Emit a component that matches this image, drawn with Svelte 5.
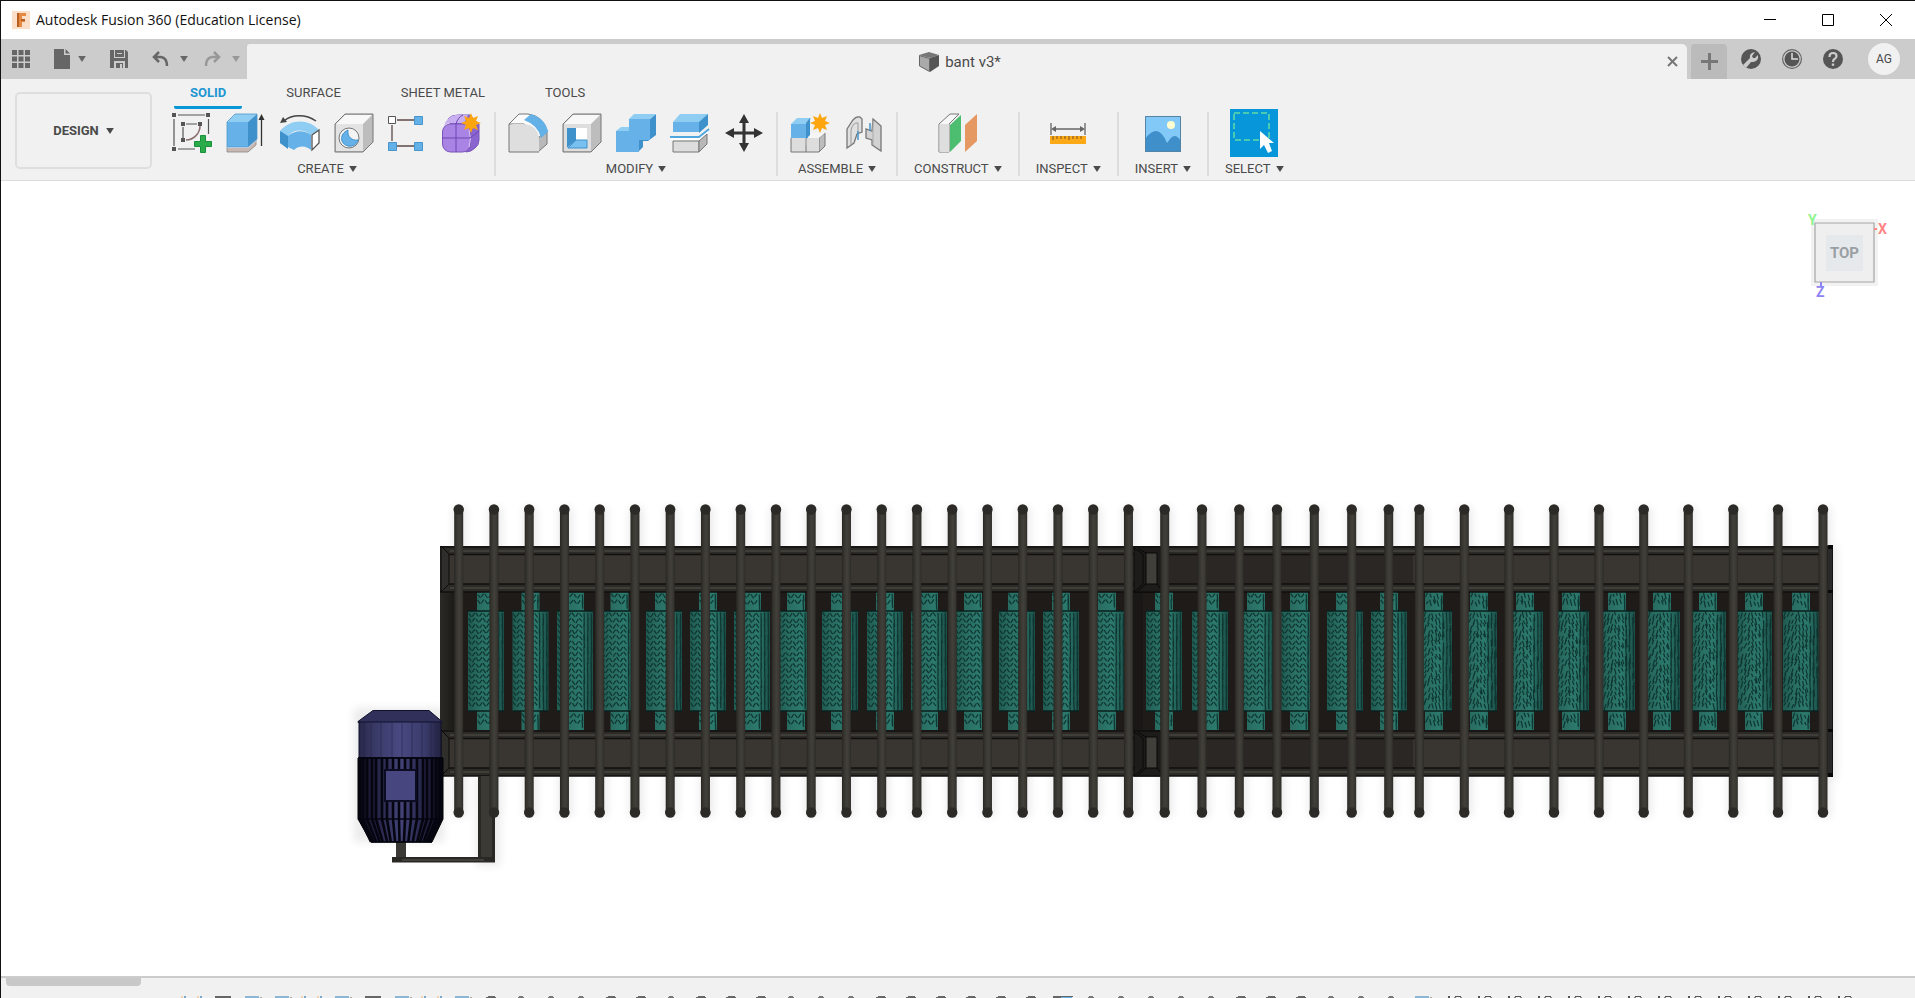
<script>
  const rods = [
    ...Array.from({ length: 20 }, (_, i) => 458.7 + i * 35.25),
    1164.7, 1202, 1239.3, 1277, 1314.3, 1351.7, 1388.7, 1419.3,
    1464.3, 1509, 1554, 1599, 1643.7, 1688.3, 1733.3, 1778, 1823
  ];
  const rollerCentres = [
    486, 530.5, 575, 619.5, 664, 708, 752, 796, 840, 885, 929, 973, 1017, 1061, 1107,
    1164, 1210, 1256, 1299, 1345, 1389, 1434, 1479, 1525, 1571, 1617, 1662, 1708, 1754, 1801
  ];

  function grain(cx, index) {
    let seed = index * 7919 + 13;
    const rnd = () => {
      seed = (seed * 1103515245 + 12345) % 2147483648;
      return seed / 2147483648;
    };
    let d = '';
    const wild = index > 20;
    const put = (x0, x1, y0, y1, pitch) => {
      let col = 0;
      for (let x = x0 + 2; x < x1 - 1; x += 3.6) {
        const dir = wild ? (x < cx - 4 ? -0.7 : 0.6) : col % 2 ? -1 : 1;
        const fine = x > cx + 7;
        for (let y = y0 + 2; y < y1 - 5; y += pitch) {
          const j = (rnd() - 0.5) * (wild ? 4 : 1.4);
          const len = fine ? 6 + rnd() * 6 : wild ? 3 + rnd() * 4 : 3.2 + rnd();
          const dx = fine ? 0.4 : 2.6 * dir;
          const yy = Math.max(y0, Math.min(y + j, y1 - len));
          d += `M${(x - dx / 2 + j * 0.3).toFixed(1)} ${yy.toFixed(1)}l${dx} ${len.toFixed(1)}`;
        }
        col++;
      }
    };
    put(cx - 18, cx + 18, 611, 711, 5.6);
    put(cx - 9, cx + 9, 592, 610, 6);
    put(cx - 9, cx + 9, 712, 730, 6);
    return d;
  }
  const rollers = rollerCentres.map((cx, i) => ({ cx, d: grain(cx, i) }));

  const fins = [360, 363, 367, 372, 376, 382, 387, 393, 399, 405, 411, 417, 423, 427, 432, 436, 439, 441];
  const taper = (x) => 401 + (x - 401) * 0.73;

  const kinds = ['sketch', 'bar', 'blue', 'blue', 'sketch', 'blue', 'bar', 'blue', 'sketch', 'blue'];
  const timeline = Array.from({ length: 56 }, (_, i) => {
    if (i < 10) return kinds[i];
    if (i === 29) return 'mixed';
    if (i === 41) return 'blue';
    if (i > 41) return 'pair';
    return [11, 12, 13, 16, 20, 21, 22, 30, 31, 32, 33, 34, 38, 39, 40].includes(i) ? 'dot' : 'dash';
  });

  const tabs = ['SOLID', 'SURFACE', 'SHEET METAL', 'TOOLS'];
  const groups = [
    { label: 'CREATE', tools: ['sketch', 'extrude', 'revolve', 'hole', 'pattern', 'form'] },
    { label: 'MODIFY', tools: ['fillet', 'shell', 'combine', 'split', 'move'] },
    { label: 'ASSEMBLE', tools: ['component', 'joint'] },
    { label: 'CONSTRUCT', tools: ['plane'] },
    { label: 'INSPECT', tools: ['measure'] },
    { label: 'INSERT', tools: ['image'] },
    { label: 'SELECT', tools: ['select'] }
  ];
  let active = $state('SOLID');
</script>

{#snippet star(x, y)}
  <path transform="translate({x} {y})" fill="#fca50f" d="M0-10 2-5 7-7 5-2 10 0 5 2 7 7 2 5 0 10-2 5-7 7-5 2-10 0-5-2-7-7-2-5z" />
{/snippet}

{#snippet glyph(name)}
  {#if name === 'sketch'}
    <svg width="40" height="40" viewBox="0 0 40 40" fill="none" stroke="#555">
      <path d="M6 2h27M2 6v27M36.500 6v15M6 36h17M14 11h11M11 14v11" stroke-width="1.200" />
      <path d="M28 13c0 7-6 14-14 14" stroke="#8a6f6f" stroke-width="1.500" />
      <path fill="#555" stroke="none" d="M0 0h4v4H0zM34 0h4v4h-4zM0 34h4v4H0zM9 9h4v4H9zM26 9h4v4h-4zM9 25h4v4H9z" />
      <path fill="#2cab4a" stroke="#18903a" d="M28.500 22.500h5v6h6v5h-6v6h-5v-6h-6v-5h6z" />
    </svg>
  {:else if name === 'extrude'}
    <svg width="40" height="40" viewBox="0 0 40 40">
      <path fill="#c9b8b2" stroke="#888" stroke-width=".8" d="M1 34h21l8-7v5l-8 7H1z" />
      <path fill="#eee" d="M1 33h21l8-7v2l-8 7H1z" />
      <path fill="#66b2e8" d="M1 9h21v25H1z" /><path fill="#8fcdf3" d="M1 9 9 1h22l-9 8z" /><path fill="#3f91cb" d="m22 9 9-8v25l-9 8z" />
      <path fill="none" stroke="#4f98cc" stroke-width=".8" d="M1 34V9l8-8h22v25l-9 8z" />
      <path stroke="#333" stroke-width="1.300" d="M35.500 33V5" /><path fill="#333" d="m35.500 1 3 6h-6z" />
    </svg>
  {:else if name === 'revolve'}
    <svg width="40" height="40" viewBox="0 0 40 40">
      <path fill="none" stroke="#444" stroke-width="1.500" d="M4 8C12 1 26 1 36 8" /><path fill="#444" d="m0 10 3-6 4 5z" />
      <path fill="#8fcdf3" d="M0 18C10 6 28 5 39 17l-8 5c-8-6-17-6-23 1z" />
      <path fill="#66b2e8" d="M0 18l8 5c7-6 16-6 23-1v15c-5-4-11-5-17 0L0 30z" />
      <path fill="#3f91cb" d="M0 18l8 5v13l-8-6z" />
      <path fill="#fff" stroke="#555" stroke-width="1.300" d="m32 22 7-5v13l-7 7z" />
    </svg>
  {:else if name === 'hole'}
    <svg width="40" height="40" viewBox="0 0 40 40" stroke="#777" stroke-linejoin="round">
      <path fill="#bdbdbd" d="m1 11 10-10h28v28L29 39H1z" /><path stroke="none" fill="#e3e3e3" d="M2 11h27v27H2z" /><path stroke="none" fill="#f8f8f8" d="M2 11 11 2h27l-9 9z" />
      <circle cx="15" cy="25" r="10" fill="#f4f4f4" /><path fill="#66b2e8" stroke="#3f91cb" d="M14 17c-9 4-8 14 0 16 5 1 9-2 10-6-6 1-11-3-10-10z" />
    </svg>
  {:else if name === 'pattern'}
    <svg width="40" height="40" viewBox="0 0 40 40">
      <path stroke="#5b4a48" stroke-width="1.300" d="M9 7h17M9 33h17M4 12v16" />
      <path fill="#fff" stroke="#555" d="M.500 3.500h7v7h-7z" />
      <path fill="#64b1e8" stroke="#4795cc" d="M26.500 3.500h8v8h-8zM.500 29.500h8v8h-8zM26.500 29.500h8v8h-8z" />
    </svg>
  {:else if name === 'form'}
    <svg width="40" height="40" viewBox="0 0 40 40">
      <path fill="#8b65cf" stroke="#7955b8" d="M6 6q3-4 10-4h12l9 9v16q0 5-4 8-4 4-9 4l-5-5z" />
      <rect x=".5" y="11" width="28" height="28" rx="8" fill="#a984e4" stroke="#7b55ba" />
      <path fill="#c8afef" d="M2 13Q5 3 14 2h12L22 10H9q-5 0-7 3z" />
      <path stroke="#d9c8f5" fill="none" d="M27 17q3 9 0 17" /><path stroke="#6e45b3" fill="none" d="M14 11v28M0 25h28l9-7M14 11q2-7 7-9" />
      {@render star(29, 10)}
    </svg>
  {:else if name === 'fillet'}
    <svg width="40" height="40" viewBox="0 0 40 40">
      <path fill="#fafafa" stroke="#777" d="M1 11 11 1h9q16 2 19 18l-8 6L16 11z" /><path fill="#b9b9b9" stroke="#777" d="m30 25 9-8v14l-9 8z" />
      <path fill="#dedede" d="M1 39V16q0-5 5-5h9q15 1 16 15v13z" /><path fill="none" stroke="#777" d="M31 39H1V11" /><path fill="#64b1e8" d="M23 1q15 5 17 18l-7 6Q30 12 16 7z" />
    </svg>
  {:else if name === 'shell'}
    <svg width="40" height="40" viewBox="0 0 40 40" stroke="#777" stroke-linejoin="round">
      <path fill="#bdbdbd" d="m1 11 10-10h28v28L29 39H1z" /><path stroke="none" fill="#dedede" d="M2 11h27v27H2z" /><path stroke="none" fill="#f8f8f8" d="M2 11 11 2h27l-9 9z" />
      <path fill="#fff" stroke="none" d="M5 15h20v20H5z" /><path fill="#3f91cb" stroke="none" d="M5 15h9v12l-9 8z" /><path fill="#78c0f0" stroke="#3f91cb" d="m6 35 8-8h11v8z" />
    </svg>
  {:else if name === 'combine'}
    <svg width="40" height="40" viewBox="0 0 40 40">
      <path fill="#3f91cb" d="m34 6 6-5v21l-8 6h-5v6l-5 5-2-15z" /><path fill="#66b2e8" d="M0 18h13V6h21v21H23v12H0z" /><path fill="#8fcdf3" d="m0 18 5-4h8v4zM13 6l5-5h22l-6 5z" />
    </svg>
  {:else if name === 'split'}
    <svg width="40" height="40" viewBox="0 0 40 40">
      <path fill="#66b2e8" d="M3 9h26v10H3z" /><path fill="#8fcdf3" d="m3 9 7-8h28l-8 8z" /><path fill="#3f91cb" d="m29 9 9-8v11l-9 8z" />
      <path fill="#fff" d="M0 23h29l9-8v5l-9 7H0z" /><path fill="none" stroke="#52a6df" stroke-width="2" d="M0 24h29l10-8" />
      <path fill="#ddd" stroke="#777" d="M3 28h26v11H3z" /><path fill="#b8b8b8" stroke="#777" d="m29 28 8-7v10l-8 8z" />
    </svg>
  {:else if name === 'move'}
    <svg width="40" height="40" viewBox="0 0 40 40" fill="#333">
      <path d="M18.500 8h3v10.500H32v3H21.500V32h-3V21.500H8v-3h10.500z" /><path d="m20 1 5 9H15zM20 39l-5-9h10zM1 20l9-5v10zM39 20l-9 5V15z" />
    </svg>
  {:else if name === 'component'}
    <svg width="40" height="40" viewBox="0 0 40 40">
      <path fill="#bdbdbd" stroke="#777" d="m29 25 6-5v13l-6 6z" /><path fill="#f5f5f5" d="m16 25 5-5h14l-6 5z" />
      <path fill="#ddd" stroke="#777" d="M1 25v14h28M16 25v14" /><path fill="#ddd" d="M2 25h13v13H2zM17 25h12v13H17z" /><path fill="#66b2e8" d="M1 11h17v14H1z" /><path fill="#8fcdf3" d="m1 11 6-6h14l-3 6z" /><path fill="#3f91cb" d="m16 10 4-5v17l-4 4z" />
      {@render star(30, 10)}
    </svg>
  {:else if name === 'joint'}
    <svg width="40" height="40" viewBox="0 0 40 40">
      <path fill="#e0e0e0" stroke="#777" stroke-width="1.300" d="m3 16 6-9q3-4 7-3l2 2v13l-5 2-3 9-7 5z" /><path fill="none" stroke="#999" d="M7 33V17q2-8 7-7v10" />
      <path fill="#d2d2d2" stroke="#777" stroke-width="1.300" d="m29 6 8 7v25l-9-6v-5l-6-2V16l6 2z" /><path fill="none" stroke="#aaa" d="M29 8v24" />
      <path stroke="#4795cc" stroke-width="1.500" d="M14 18v9M26 10v8" />
    </svg>
  {:else if name === 'plane'}
    <svg width="40" height="40" viewBox="0 0 40 40">
      <path fill="#f7f7f7" stroke="#777" d="m1 11 11-10h9l-10 10v28H1z" /><path fill="#dedede" d="M1.500 11H11v28H1.500z" />
      <path fill="#4dbd70" d="m12 12 11-10v26L12 39z" /><path fill="#e59861" d="M27 12 39 1v27L27 39z" />
    </svg>
  {:else if name === 'measure'}
    <svg width="40" height="40" viewBox="0 0 40 40">
      <path fill="none" stroke="#666" stroke-width="1.300" d="M3 10v12M37 10v12M5 16h30" /><path fill="#666" d="m3 16 5-3v6zM37 16l-5-3v6z" />
      <path fill="#fca918" d="M2 23h36v8H2z" /><path stroke="#755520" d="M5 23v4M9 23v3M13 23v3M17 23v3M21 23v4M25 23v3M29 23v3M33 23v3" />
    </svg>
  {:else if name === 'image'}
    <svg width="40" height="40" viewBox="0 0 40 40">
      <path fill="#83c9f7" d="M2 3h36v36H2z" /><circle cx="28" cy="12" r="4" fill="#ffffd2" />
      <path fill="#3f8fca" d="M2 26q6-8 11-8 6 0 11 12l3-4q5-7 11 2v11H2z" /><path fill="none" stroke="#5583a4" d="M2.500 3.500h35v35h-35z" />
    </svg>
  {:else if name === 'select'}
    <svg width="48" height="48" viewBox="0 0 48 48">
      <path fill="#0796d9" d="M0 0h48v48H0z" /><path fill="none" stroke="#62dca7" stroke-width="1.500" stroke-dasharray="6 3" d="M4 4h35v27H4z" />
      <path fill="#fff" d="M30 22v18l4-4 4 8 4-2-3-8h5z" />
    </svg>
  {/if}
{/snippet}

{#snippet tri()}
  <svg class="tri" width="9" height="7" viewBox="0 0 9 7" aria-hidden="true"><path fill="currentColor" d="M0 0h9L4.500 7z" /></svg>
{/snippet}

<div class="app">
  <header class="titlebar">
    <svg width="18" height="18" viewBox="0 0 18 18" aria-hidden="true">
      <path fill="#fbdfc8" d="M0 0h18v18H0z" /><path fill="#e58a40" d="M5 2h9v3h-4v3h3v3h-3v5H5z" /><path fill="#b55f25" d="M5 2h2v14H5zM9 8h4v2H9z" />
    </svg>
    <h1>Autodesk Fusion 360 (Education License)</h1>
    <div class="window-buttons">
      <button aria-label="Minimize"><svg width="12" height="12" viewBox="0 0 12 12"><path stroke="#000" d="M0 5.500h12" /></svg></button>
      <button aria-label="Maximize"><svg width="12" height="12" viewBox="0 0 12 12"><path fill="none" stroke="#000" d="M.500.500h11v11H.500z" /></svg></button>
      <button aria-label="Close"><svg width="12" height="12" viewBox="0 0 12 12"><path stroke="#000" d="m0 0 12 12M12 0 0 12" /></svg></button>
    </div>
  </header>

  <div class="quickbar">
    <div class="quick">
      <button aria-label="Data panel"><svg width="18" height="18" viewBox="0 0 18 18" fill="#666"><path d="M0 0h5v5H0zM6.500 0h5v5h-5zM13 0h5v5h-5zM0 6.500h5v5H0zM6.500 6.500h5v5h-5zM13 6.500h5v5h-5zM0 13h5v5H0zM6.500 13h5v5h-5zM13 13h5v5h-5z" /></svg></button>
      <button class="drop" aria-label="File"><svg width="17" height="20" viewBox="0 0 17 20" fill="#666"><path d="M0 0h10v6h6v14H0zM11.500 0 16 4.500h-4.500z" /></svg>{@render tri()}</button>
      <button aria-label="Save"><svg width="18" height="18" viewBox="0 0 18 18"><path fill="#666" d="M0 0h16l2 2v16H0z" /><path fill="#ccc" d="M4 0h1v7h9V0h1v8H4zM4 11h11v7h-2v-5H6v5H4zM7 3h5v1H7z" /><path fill="#ccc" d="M10 14h2v4h-2z" /></svg></button>
      <button class="drop" aria-label="Undo"><svg width="17" height="16" viewBox="0 0 17 16" fill="none" stroke="#666" stroke-width="2.500"><path d="M7 1 2 6l5 5M2 6h7q6 1 6 9" /></svg>{@render tri()}</button>
      <button class="drop faded" aria-label="Redo"><svg width="17" height="16" viewBox="0 0 17 16" fill="none" stroke="#666" stroke-width="2.500"><path d="m10 1 5 5-5 5M15 6H8q-6 1-6 9" /></svg>{@render tri()}</button>
    </div>
    <div class="document">
      <span class="docname">
        <svg width="20" height="20" viewBox="0 0 20 20" aria-hidden="true"><path fill="#777" d="M0 3 10 0l10 3-9 3z" /><path fill="#aaa" stroke="#666" d="m.500 3.500 10 3v13L.500 14z" /><path fill="#555" d="m11 6 9-3v11l-9 6z" /></svg>
        bant v3*
      </span>
      <button class="close" aria-label="Close document"><svg width="11" height="11" viewBox="0 0 11 11"><path stroke="#777" stroke-width="2" d="m1 1 9 9M10 1l-9 9" /></svg></button>
    </div>
    <button class="new" aria-label="New document"><svg width="17" height="17" viewBox="0 0 17 17"><path stroke="#777" stroke-width="3" d="M8.500 0v17M0 8.500h17" /></svg></button>
    <div class="account">
      <button aria-label="Extensions"><svg width="20" height="20" viewBox="0 0 20 20"><circle cx="10" cy="10" r="10" fill="#555" /><path fill="#ccc" d="M2 16 9 9q-1-5 5-6l-3 4 1 2 2 0 3-3q1 6-5 7h-2l-5 6z" /></svg></button>
      <button aria-label="Job status"><svg width="20" height="20" viewBox="0 0 20 20"><circle cx="10" cy="10" r="9.400" fill="none" stroke="#666" stroke-width="1.200" /><circle cx="10" cy="10" r="7.500" fill="#555" /><path fill="none" stroke="#ddd" stroke-width="1.500" d="M10 4v6h6" /></svg></button>
      <button aria-label="Help"><svg width="20" height="20" viewBox="0 0 20 20"><circle cx="10" cy="10" r="10" fill="#555" /><path fill="none" stroke="#ccc" stroke-width="2.200" d="M6.500 8q0-4 3.500-4t3.500 3q0 2-2 3-1.500.800-1.500 3" /><path fill="#ccc" d="M8.800 14.500h2.400v2.300H8.800z" /></svg></button>
      <button class="avatar">AG</button>
    </div>
  </div>

  <div class="ribbon">
    <button class="workspace">DESIGN {@render tri()}</button>
    <div class="commands">
      <nav class="tabs">
        {#each tabs as tab}
          <button class:active={active === tab} onclick={() => (active = tab)}>{tab}</button>
        {/each}
      </nav>
      <div class="groups">
        {#each groups as group}
          <section class="group">
            <div class="tools">
              {#each group.tools as tool}
                <button aria-label={tool}>{@render glyph(tool)}</button>
              {/each}
            </div>
            <button class="label">{group.label} {@render tri()}</button>
          </section>
        {/each}
      </div>
    </div>
  </div>

  <main class="viewport">
    <svg class="model" viewBox="1 181 1914 795" role="img" aria-label="Roller conveyor, top view">
      <defs>
        <linearGradient id="rod"><stop offset="0" stop-color="#262521" /><stop offset=".2" stop-color="#34332e" /><stop offset=".55" stop-color="#42403a" /><stop offset=".85" stop-color="#383631" /><stop offset="1" stop-color="#2a2925" /></linearGradient>
        <linearGradient id="roller"><stop offset="0" stop-color="#1f5a50" /><stop offset=".3" stop-color="#296d62" /><stop offset=".65" stop-color="#2c796d" /><stop offset="1" stop-color="#1b5049" /></linearGradient>
        <linearGradient id="motor"><stop offset="0" stop-color="#28284a" /><stop offset=".2" stop-color="#3a3a68" /><stop offset=".5" stop-color="#4a4881" /><stop offset=".8" stop-color="#3b3b6b" /><stop offset="1" stop-color="#222242" /></linearGradient>
        <linearGradient id="casing"><stop offset="0" stop-color="#0b0b18" /><stop offset=".25" stop-color="#26264a" /><stop offset=".5" stop-color="#45447a" /><stop offset=".75" stop-color="#26264a" /><stop offset="1" stop-color="#0b0b18" /></linearGradient>
        <linearGradient id="post"><stop offset="0" stop-color="#2a2a25" /><stop offset="1" stop-color="#191614" /></linearGradient>
        <filter id="soft" x="-5%" y="-10%" width="110%" height="120%"><feGaussianBlur stdDeviation="4" /></filter>
      </defs>

      <g filter="url(#soft)" opacity=".08">
        {#each rods as x}<rect x={x - 6} y="507" width="14" height="310" />{/each}
        <path d="M354 708h90v134h-90zM476 776h24v90h-24zM1825 545h12v234h-12z" />
      </g>

      <path fill="#1f1b18" d="M440 546h1393v230H440z" />
      <path fill="url(#post)" d="M440 592h19v138h-19z" />
      {#each rollers as r}
        <path fill="url(#roller)" d="M{r.cx - 9} 592h18v19h9v100h-9v19h-18v-19h-9V611h9z" />
        <path fill="none" stroke="#0f3530" stroke-width="1.200" d={r.d} />
        <path stroke="#0b211e" stroke-width="1.300" d="M{r.cx - 18} 611h36M{r.cx - 18} 711h36" />
      {/each}
      <path fill="#1a1817" d="M1127 592h16v138h-16z" />

      {#each [546, 730] as y}
        <path fill="#2c2b28" d="M440 {y}h1393v46H440z" />
        <path fill="#393631" d="M449 {y + 8}h1378v30H449z" />
        <path fill="#2a2725" d="M1168 {y + 8}h245v30h-245z" />
        <path stroke="#403e39" stroke-width="2" d="M450 {y + 5}h1377M450 {y + 42}h1377" />
        <path stroke="#11100e" stroke-width="1.500" d="M440 {y + 1}h1393M449 {y + 8.500}h1378M449 {y + 38}h1378M440 {y + 46}h1393" />
        <path fill="#2f2e2a" stroke="#0b0b0a" d="M441 {y}l8 8v30l-8 8z" />
        <path fill="#1d1c1a" stroke="#080808" d="M1134 {y + 1}h27v45h-27zM1134 {y + 2}l9 6v30l-9 8" />
        <path fill="#403f3a" stroke="#080808" d="M1146 {y + 7}h11v31h-11z" />
        <path stroke="#080808" fill="none" d="m1138 {y + 2} 8 5M1138 {y + 45}l8-7M1157 {y + 38}l5 6" />
      {/each}
      <path fill="#2a2a2b" stroke="#121212" d="M1827 546h5.500v230h-5.500z" /><path fill="#080808" d="M1828 590h5v3h-5zM1828 729h5v3h-5zM1828 545h5v4h-5zM1828 773h5v4h-5z" />

      <path fill="#292824" d="M478 776h17v82h-17z" /><path fill="#3b3a35" d="M481 776h11v82h-11z" />
      <path fill="#3a3935" d="M396 840h10v18h-10z" /><path fill="#292825" d="M392 857h103v5.500H392z" /><path fill="#413f3a" d="M402 859h82v2h-82z" />

      {#each rods as x}
        <rect x={x - 4.500} y="508" width="9" height="306" fill="url(#rod)" />
        <circle cx={x} cy="509.500" r="5.200" fill="#2b2a27" /><circle cx={x} cy="812.500" r="5.200" fill="#2b2a27" />
      {/each}

      <path fill="#30305a" stroke="#11112b" d="M373 710.500h56l13 11v1h-84v-1z" />
      <path fill="url(#motor)" stroke="#11112b" d="M359 722h82v36h-82z" />
      <path stroke="#252548" opacity=".6" d="M364 723v34M371 723v34M381 723v34M392 723v34M402 723v34M412 723v34M422 723v34M431 723v34M436 723v34" />
      <path fill="url(#casing)" stroke="#000" d="M358 758h85v61l-11 23h-61l-13-23z" />
      {#each fins as x}<path fill="none" stroke="#05050f" stroke-width="2.600" d="M{x} 758v61L{taper(x)} 842" />{/each}
      <path stroke="#05050f" stroke-width="1.500" d="M358 758h85M358 819h85M371 842h61" />
      <path fill="#47467e" stroke="#0c0c24" stroke-width="2" d="M385 770h31v31h-31z" />
    </svg>

    <button class="viewcube" aria-label="View cube: TOP">
      <svg width="90" height="92" viewBox="0 0 90 92">
        <path fill="#000" opacity=".05" d="M8 9h67v67H8z" />
        <path fill="#efefef" stroke="#a5a5a5" stroke-width="1.200" d="M12 13h59v59H12z" /><path fill="#e6e9ec" d="M23 25h37v36H23z" />
        <text class="face" x="41.500" y="48" text-anchor="middle">TOP</text>
        <text class="axis" x="5" y="15" fill="#8df58d">Y</text>
        <text class="axis" x="75" y="24" fill="#ff8585">X</text>
        <text class="axis" x="13" y="87" fill="#8b84f2">Z</text>
        <path stroke="#ff8585" stroke-width="2" d="M71 19h3" /><path stroke="#8b84f2" stroke-width="2" d="M18 72v5" />
      </svg>
    </button>
  </main>

  <footer class="timeline">
    <div class="handle"></div>
    <div class="features">
      {#each timeline as kind}
        <svg width="30" height="2" viewBox="0 0 30 2" aria-hidden="true">
          {#if kind === 'sketch'}<path fill="#7aa7cc" d="M6 0h2v2H6zM22 0h2v2h-2z" /><path fill="#f1d2ae" d="M3 0h2v2H3zM19 0h2v2h-2z" />
          {:else if kind === 'bar'}<path fill="#666" d="M7 0h16v2H7z" />
          {:else if kind === 'blue'}<path fill="#8cb6d2" d="M7 0h14v2H7z" /><path fill="#aaa" d="M22 1h2v1h-2z" />
          {:else if kind === 'mixed'}<path fill="#666" d="M5 0h20v1H5zM5 1h8v1H5z" /><path fill="#69afe0" d="M13 1h11v1H13z" />
          {:else if kind === 'pair'}<path fill="#555" d="M10 0h2v2h-2zM17 0h6v1h-6z" /><path fill="#888" d="M16 1h2v1h-2zM22 1h2v1h-2z" />
          {:else if kind === 'dot'}<path fill="#777" d="M11 0h4v1h-4zM10 1h6v1h-6z" />
          {:else}<path fill="#666" d="M10 0h7v1h-7zM8 1h10v1H8z" />{/if}
        </svg>
      {/each}
    </div>
  </footer>
</div>

<style>
  :global(body) { margin: 0; }
  .app {
    box-sizing: border-box;
    display: flex;
    flex-direction: column;
    min-height: 100vh;
    border-top: 1px solid #111;
    border-left: 1px solid #111;
    background: #fff;
    color: #4a4a4a;
    font: 13px/16px Roboto, "Liberation Sans", sans-serif;
    overflow: hidden;
  }
  button {
    display: flex;
    align-items: center;
    justify-content: center;
    padding: 0;
    border: 0;
    background: none;
    color: inherit;
    font: inherit;
  }
  svg { display: block; flex: none; }
  .titlebar { display: flex; align-items: center; height: 38px; padding-left: 11px; }
  h1 { flex: 1; margin: 0 0 0 6px; color: #111; font: 14px/20px "Open Sans", "Noto Sans", sans-serif; }
  .window-buttons { display: flex; align-self: stretch; }
  .window-buttons button { width: 58px; }

  .quickbar { display: flex; height: 40px; background: #ccc; }
  .quick { display: flex; align-items: center; gap: 24px; box-sizing: border-box; width: 246px; padding-left: 11px; color: #666; }
  .quick button:nth-child(4) { margin-right: -8px; }
  .drop { gap: 7px; }
  .quick .drop:nth-child(n + 4) { gap: 11px; }
  .faded { opacity: .5; }
  .document { flex: 1; display: flex; align-items: center; margin-top: 5px; background: #f1f1f1; border-radius: 3px 5px 0 0; }
  .docname { flex: 1; display: flex; align-items: center; justify-content: center; gap: 6px; padding-left: 16px; font-size: 15px; line-height: 20px; }
  .close { width: 30px; height: 30px; }
  .new { width: 36px; margin: 5px 0 0 4px; border-radius: 4px 4px 0 0; background: #bbb; }
  .account { display: flex; align-items: center; gap: 21px; padding: 0 15px 0 14px; }
  .avatar { width: 32px; height: 32px; margin-left: 4px; border-radius: 50%; background: #f1f1f1; font-size: 12px; }

  .ribbon { display: flex; height: 101px; border-bottom: 1px solid #ddd; background: #f1f1f1; }
  .workspace { gap: 7px; box-sizing: border-box; width: 137px; height: 77px; margin: 13px 8px 0 14px; border: 2px solid #dedede; border-radius: 5px; font-weight: 700; }
  .tabs { display: flex; gap: 28px; height: 30px; padding-left: 14px; }
  .tabs button { padding: 0 16px; border-bottom: 3px solid transparent; }
  .tabs .active { border-color: #0b96d8; border-radius: 2px; color: #2196d3; font-weight: 700; }
  .groups { display: flex; }
  .group { display: flex; flex-direction: column; align-items: center; height: 64px; margin-top: 3px; padding: 0 12px; border-right: 2px solid #ddd; }
  .group:last-child { border-right: 0; }
  .tools { display: flex; flex: none; align-items: center; gap: 14px; height: 48px; margin-top: -3px; }
  .label { flex: none; gap: 5px; margin-top: 4px; padding: 0 4px; }
  .tri { width: 8px; height: 6px; }

  .viewport { position: relative; flex: 1; }
  .model { width: 100%; height: auto; }
  .viewcube { position: absolute; top: 29px; right: 22px; }
  .face { fill: #9a9fa3; font: 700 15px Roboto, sans-serif; }
  .axis { font: 700 14px Roboto, sans-serif; }

  .timeline { display: flex; align-items: flex-start; height: 20px; border-top: 2px solid #ccc; background: #f1f1f1; }
  .handle { width: 135px; height: 8px; margin-left: 5px; border-radius: 0 0 4px 4px; background: #c8c8c8; }
  .features { display: flex; align-self: flex-end; padding-left: 37px; }
</style>
